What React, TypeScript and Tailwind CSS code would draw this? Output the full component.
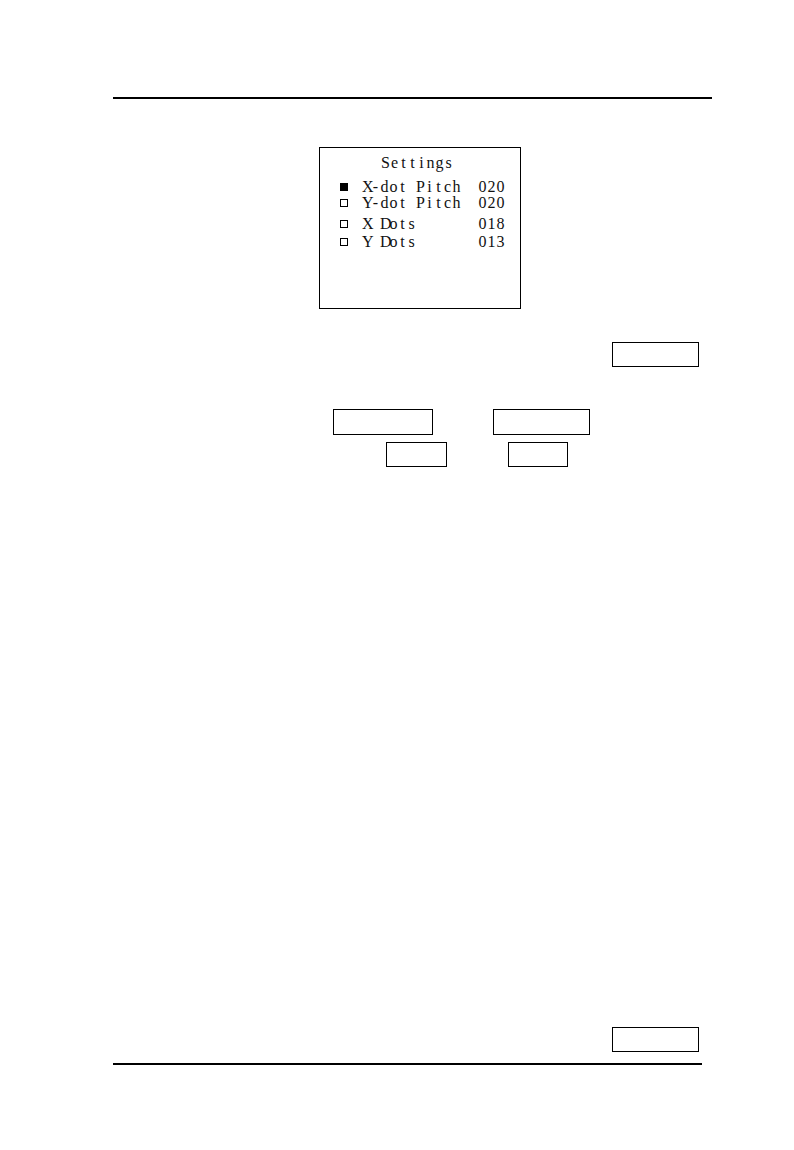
import React from 'react';

const rows = [
  { label: 'X-dot Pitch', value: '020', active: true, mt: 'mt-[8px]' },
  { label: 'Y-dot Pitch', value: '020', active: false, mt: 'mt-0' },
  { label: 'X Dots', value: '018', active: false, mt: 'mt-[5px]' },
  { label: 'Y Dots', value: '013', active: false, mt: 'mt-[2px]' },
];

// LCD bitmap font: every character sits in a 9px cell
const Cells: React.FC<{ text: string; className?: string }> = ({ text, className = '' }) => (
  <span className={`flex ${className}`}>
    {text.split('').map((ch, i) => (
      <span key={i} className="inline-block w-[9px] shrink-0 text-center">
        {ch === ' ' ? '\u00a0' : ch}
      </span>
    ))}
  </span>
);

const KeyBox: React.FC<{ className: string }> = ({ className }) => (
  <div className={`shrink-0 border border-black bg-white ${className}`} />
);

const App: React.FC = () => {
  return (
    <div className="w-[794px] h-[1150px] bg-white pt-[97px] font-['Liberation_Serif',serif] text-[#111]">
      {/* header rule */}
      <div className="ml-[113px] h-[2px] w-[599px] bg-black" />

      {/* LCD settings screen */}
      <div className="ml-[319px] mt-[48px] h-[162px] w-[202px] border border-black pt-[7px] text-[16px] leading-[16px]">
        <Cells text="Settings" className="ml-[61px]" />
        {rows.map((row) => (
          <div key={row.label} className={`flex h-[16px] items-center ${row.mt}`}>
            <span
              className={`ml-[20px] h-[8px] w-[8px] shrink-0 ${
                row.active ? 'bg-black' : 'border border-black bg-white'
              }`}
            />
            <Cells text={row.label} className="ml-[14px] w-[116px]" />
            <Cells text={row.value} />
          </div>
        ))}
      </div>

      {/* key labels */}
      <div className="mt-[33px] flex">
        <KeyBox className="ml-[612px] h-[25px] w-[87px]" />
      </div>
      <div className="mt-[42px] flex">
        <KeyBox className="ml-[333px] h-[26px] w-[100px]" />
        <KeyBox className="ml-[60px] h-[26px] w-[97px]" />
      </div>
      <div className="mt-[7px] flex">
        <KeyBox className="ml-[386px] h-[25px] w-[61px]" />
        <KeyBox className="ml-[61px] h-[25px] w-[60px]" />
      </div>

      <div className="mt-[560px] flex">
        <KeyBox className="ml-[612px] h-[25px] w-[87px]" />
      </div>

      {/* footer rule */}
      <div className="ml-[113px] mt-[11px] h-[2px] w-[589px] bg-black" />
    </div>
  );
};

export default App;
